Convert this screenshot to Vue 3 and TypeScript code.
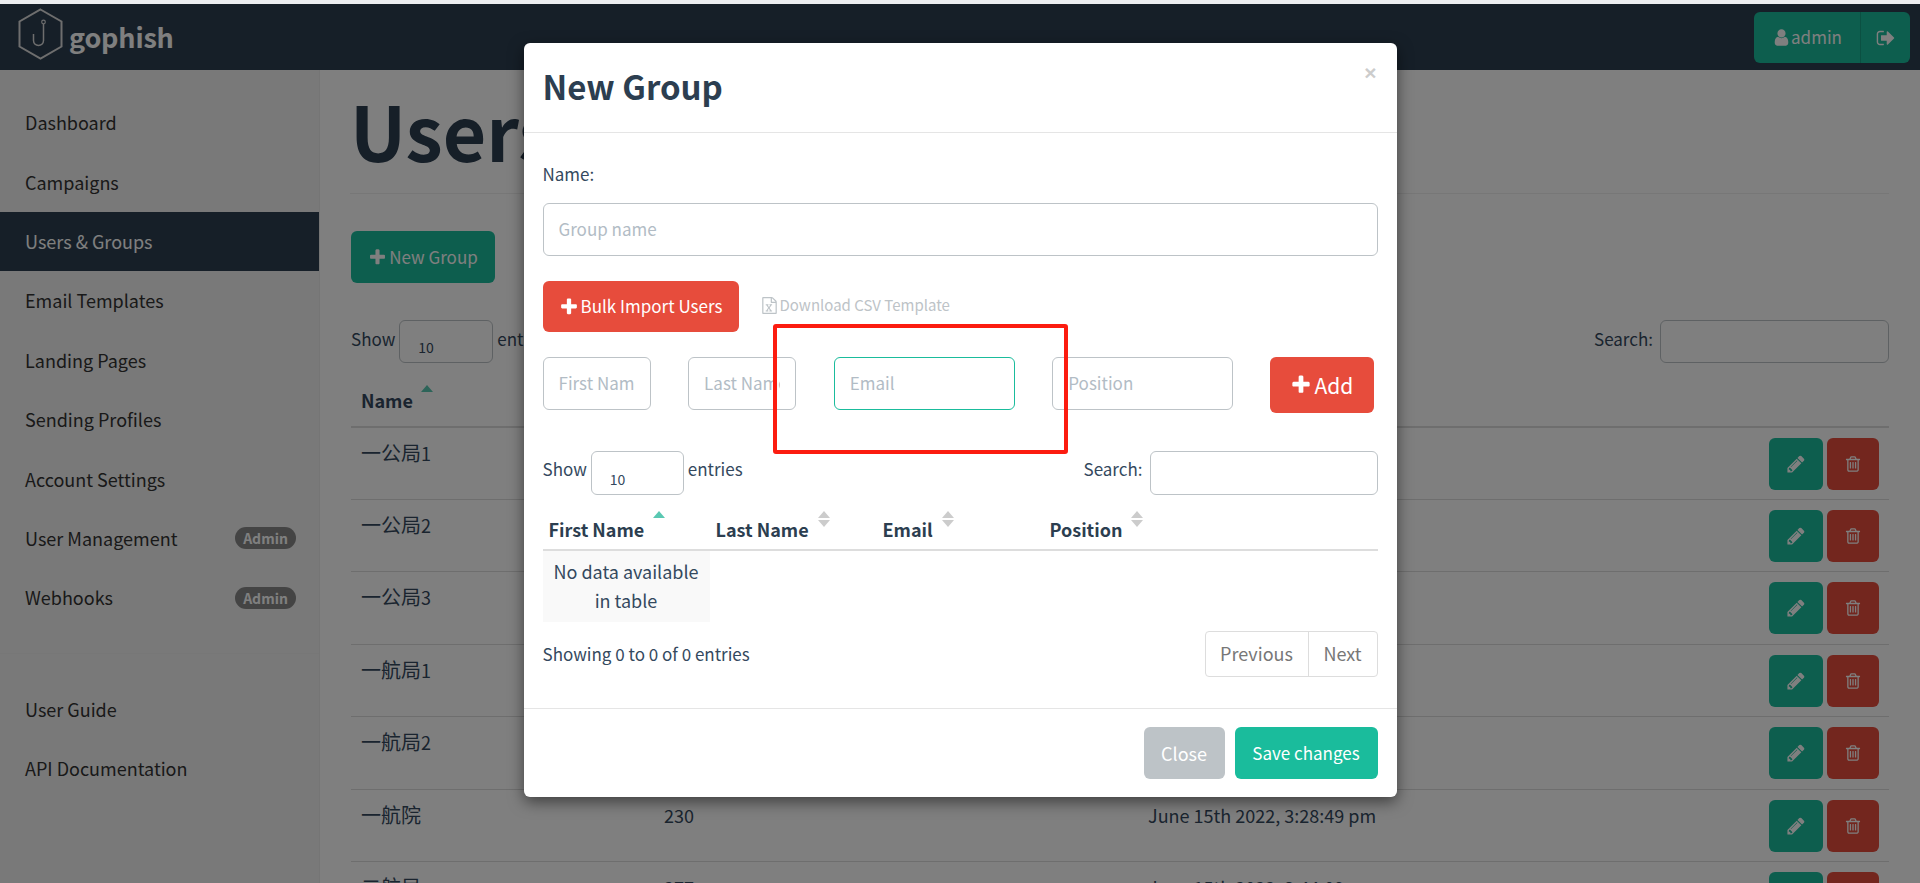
<script setup lang="ts">
interface Row { zh: string; suffix: string; count: string; date: string }

const icons = {
  plus: 'M1600 736v192q0 40-28 68t-68 28h-416v416q0 40-28 68t-68 28h-192q-40 0-68-28t-28-68v-416h-416q-40 0-68-28t-28-68v-192q0-40 28-68t68-28h416v-416q0-40 28-68t68-28h192q40 0 68 28t28 68v416h416q40 0 68 28t28 68z',
  user: 'M1536 1399q0 109-62.5 187t-150.5 78h-854q-88 0-150.5-78t-62.5-187q0-85 8.5-160.5t31.5-152 58.5-131 94-89 134.5-34.5q131 128 313 128t313-128q76 0 134.5 34.5t94 89 58.5 131 31.5 152 8.5 160.5zm-256-887q0 159-112.5 271.5t-271.5 112.5-271.5-112.5-112.5-271.5 112.5-271.5 271.5-112.5 271.5 112.5 112.5 271.5z',
  signOut: 'M704 1440q0 4 1 20t.5 26.5-3 23.5-10 19.5-20.5 6.5h-320q-119 0-203.5-84.5t-84.5-203.5v-704q0-119 84.5-203.5t203.5-84.5h320q13 0 22.5 9.5t9.5 22.5q0 4 1 20t.5 26.5-3 23.5-10 19.5-20.5 6.5h-320q-66 0-113 47t-47 113v704q0 66 47 113t113 47h312l11.5 1 11.5 3 8 5.5 7 9 2 13.5zm928-544q0 26-19 45l-544 544q-19 19-45 19t-45-19-19-45v-288h-448q-26 0-45-19t-19-45v-384q0-26 19-45t45-19h448v-288q0-26 19-45t45-19 45 19l544 544q19 19 19 45z',
  pencil: 'M491 1536l91-91-235-235-91 91v107h128v128h107zm523-928q0-22-22-22-10 0-17 7l-542 542q-7 7-7 17 0 22 22 22 10 0 17-7l542-542q7-7 7-17zm-54-192l416 416-832 832h-416v-416zm683 96q0 53-37 90l-166 166-416-416 166-165q36-38 90-38 53 0 91 38l235 234q37 39 37 91z',
  trash: 'M704 736v576q0 14-9 23t-23 9h-64q-14 0-23-9t-9-23v-576q0-14 9-23t23-9h64q14 0 23 9t9 23zm256 0v576q0 14-9 23t-23 9h-64q-14 0-23-9t-9-23v-576q0-14 9-23t23-9h64q14 0 23 9t9 23zm256 0v576q0 14-9 23t-23 9h-64q-14 0-23-9t-9-23v-576q0-14 9-23t23-9h64q14 0 23 9t9 23zm128 724v-948h-896v948q0 22 7 40.5t14.5 27 10.5 8.5h832q3 0 10.5-8.5t14.5-27 7-40.5zm-672-1076h448l-48-117q-7-9-17-11h-317q-10 2-17 11zm928 32v64q0 14-9 23t-23 9h-96v948q0 83-47 143.5t-113 60.5h-832q-66 0-113-58.5t-47-141.5v-952h-96q-14 0-23-9t-9-23v-64q0-14 9-23t23-9h309l70-167q15-37 54-63t79-26h320q40 0 79 26t54 63l70 167h309q14 0 23 9t9 23z',
  excel: 'M1596 380q28 28 48 76t20 88v1152q0 40-28 68t-68 28h-1344q-40 0-68-28t-28-68v-1600q0-40 28-68t68-28h896q40 0 88 20t76 48zm-444-244v376h376q-10-29-22-41l-313-313q-12-12-41-22zm384 1528v-1024h-416q-40 0-68-28t-28-68v-416h-768v1536h1280zm-1043-244v106h281v-106h-75l103-161q5-7 10-16.5t7.5-13.5 3.5-4h2q1 4 5 10 2 4 4.5 7.5t6 8 6.5 8.5l107 161h-76v106h291v-106h-68l-192-273 195-282h67v-107h-279v107h74l-103 159q-4 7-10 16.5t-9 13.5l-2 3h-2q-1-4-5-10-6-11-17-23l-106-159h76v-107h-290v107h68l189 272-194 283h-68z'
}

const primaryNav = [
  { label: 'Dashboard' },
  { label: 'Campaigns' },
  { label: 'Users & Groups', active: true },
  { label: 'Email Templates' },
  { label: 'Landing Pages' },
  { label: 'Sending Profiles' },
  { label: 'Account Settings' },
  { label: 'User Management', admin: true },
  { label: 'Webhooks', admin: true }
]
const secondaryNav = ['User Guide', 'API Documentation']

const rows: Row[] = [
  { zh: '一公局', suffix: '1', count: '230', date: 'June 15th 2022, 3:20:11 pm' },
  { zh: '一公局', suffix: '2', count: '230', date: 'June 15th 2022, 3:21:37 pm' },
  { zh: '一公局', suffix: '3', count: '230', date: 'June 15th 2022, 3:23:02 pm' },
  { zh: '一航局', suffix: '1', count: '230', date: 'June 15th 2022, 3:25:18 pm' },
  { zh: '一航局', suffix: '2', count: '230', date: 'June 15th 2022, 3:27:03 pm' },
  { zh: '一航院', suffix: '', count: '230', date: 'June 15th 2022, 3:28:49 pm' },
  { zh: '二航局', suffix: '', count: '277', date: 'June 15th 2022, 3:44:09 pm' }
]

const modalColumns = [
  { label: 'First Name', sorted: true },
  { label: 'Last Name', sorted: false },
  { label: 'Email', sorted: false },
  { label: 'Position', sorted: false }
]
</script>

<template>
  <div class="screen">
    <div class="top-strip"></div>
    <header class="navbar">
      <div class="brand">
        <svg class="hex" viewBox="0 0 46 52" width="46" height="52" fill="none">
          <path d="M22.5 1.5 43.5 13.5V38.5L22.5 50.5 1.5 38.5V13.5Z" stroke="#dcdcdc" stroke-width="2" />
          <circle cx="25.5" cy="14" r="1.8" stroke="#dcdcdc" stroke-width="1.2" />
          <path d="M25.5 16V32.5C25.5 39 15.5 39 15.5 32.5V26" stroke="#dcdcdc" stroke-width="1.5" />
        </svg>
        <span class="brand-name">gophish</span>
      </div>
      <div class="account">
        <span class="account-name">
          <svg class="ic" viewBox="0 0 1792 1792"><path :d="icons.user" /></svg>
          admin
        </span>
        <span class="account-exit">
          <svg class="ic" viewBox="0 0 1792 1792"><path :d="icons.signOut" /></svg>
        </span>
      </div>
    </header>

    <div class="layout">
      <aside class="sidebar">
        <nav class="nav-group">
          <a v-for="item in primaryNav" :key="item.label" class="nav-item" :class="{ active: item.active }">
            <span>{{ item.label }}</span>
            <span v-if="item.admin" class="badge">Admin</span>
          </a>
        </nav>
        <div class="nav-rule"></div>
        <nav class="nav-group">
          <a v-for="label in secondaryNav" :key="label" class="nav-item">{{ label }}</a>
        </nav>
      </aside>

      <main class="content">
        <h1 class="page-title">Users &amp; Groups</h1>
        <button class="btn green new-group">
          <svg class="ic" viewBox="0 0 1792 1792"><path :d="icons.plus" /></svg>
          New Group
        </button>
        <div class="dt-bar">
          <label class="dt-length">
            <span class="dt-text">Show</span>
            <select class="dt-select page-select"><option>10</option></select>
            <span class="dt-text">entries</span>
          </label>
          <label class="dt-search">
            <span class="dt-text">Search:</span>
            <input class="dt-input page-search" />
          </label>
        </div>
        <div class="grid-row head">
          <div class="th-name">Name <span class="caret-up teal"></span></div>
          <div># of Members</div>
          <div>Modified Date</div>
          <div></div>
        </div>
        <div v-for="row in rows" :key="row.zh + row.suffix" class="grid-row">
          <div class="cell name-cell"><span class="zh">{{ row.zh }}</span>{{ row.suffix }}</div>
          <div class="cell">{{ row.count }}</div>
          <div class="cell">{{ row.date }}</div>
          <div class="actions">
            <button class="btn green square">
              <svg class="ic ic-pencil" viewBox="0 0 1792 1792"><path :d="icons.pencil" /></svg>
            </button>
            <button class="btn red square narrow">
              <svg class="ic" viewBox="0 0 1792 1792"><path :d="icons.trash" /></svg>
            </button>
          </div>
        </div>
      </main>
    </div>

    <div class="backdrop">
      <section class="modal">
        <header class="modal-head">
          <h2>New Group</h2>
          <span class="modal-x">×</span>
        </header>
        <div class="modal-body">
          <label class="name-label">Name:</label>
          <input class="field name-field" placeholder="Group name" />

          <div class="bulk-row">
            <button class="btn bulk">
              <svg class="ic" viewBox="0 0 1792 1792"><path :d="icons.plus" /></svg>
              Bulk Import Users
            </button>
            <span class="csv">
              <svg class="ic csv-ic" viewBox="0 0 1792 1792"><path :d="icons.excel" /></svg>
              Download CSV Template
            </span>
          </div>

          <div class="target-row">
            <input class="field" placeholder="First Name" />
            <input class="field" placeholder="Last Name" />
            <input class="field focused" placeholder="Email" />
            <input class="field" placeholder="Position" />
            <button class="btn add">
              <svg class="ic" viewBox="0 0 1792 1792"><path :d="icons.plus" /></svg>
              Add
            </button>
          </div>

          <div class="modal-bar">
            <label class="dt-length">
              <span class="dt-text">Show</span>
              <select class="dt-select"><option>10</option></select>
              <span class="dt-text">entries</span>
            </label>
            <label class="dt-search">
              <span class="dt-text">Search:</span>
              <input class="dt-input" />
            </label>
          </div>

          <div class="modal-head-row">
            <div v-for="col in modalColumns" :key="col.label" class="modal-th">
              <span>{{ col.label }}</span>
              <span class="sorter">
                <span class="caret-up" :class="{ teal: col.sorted }"></span>
                <span v-if="!col.sorted" class="caret-down"></span>
              </span>
            </div>
          </div>
          <div class="empty-cell">No data available in table</div>

          <div class="modal-foot-row">
            <span class="showing">Showing 0 to 0 of 0 entries</span>
            <div class="pager">
              <span class="pager-prev">Previous</span>
              <span class="pager-next">Next</span>
            </div>
          </div>
        </div>
        <footer class="modal-foot">
          <button class="btn grey">Close</button>
          <button class="btn save">Save changes</button>
        </footer>
        <div class="annotation"></div>
      </section>
    </div>
  </div>
</template>

<style>
html, body { margin: 0; height: 883px; overflow: hidden; background: #fff; }
</style>

<style scoped>
* { box-sizing: border-box; }
.screen {
  position: relative;
  height: 883px;
  overflow: hidden;
  font-family: "Noto Sans CJK SC", "Noto Sans", sans-serif;
  font-size: 18px;
  line-height: 28.8px;
  color: #34495e;
  background: #fff;
}
.top-strip { height: 4px; background: #eceef0; }
.navbar {
  height: 66px;
  background: #2c3e50;
  display: flex;
  align-items: flex-start;
  justify-content: space-between;
  padding: 8px 10px 0 18px;
}
.brand { display: flex; align-items: flex-start; color: #fff; }
.hex { margin-top: -4px; display: block; }
.brand-name { font-size: 27px; font-weight: 700; line-height: 40px; margin: 5px 0 0 5px; letter-spacing: -0.2px; }
.account {
  display: flex;
  height: 51px;
  background: #1abc9c;
  border-radius: 6px;
  color: #fff;
  align-items: center;
  font-size: 17px;
}
.account-name {
  width: 107px;
  height: 100%;
  display: flex;
  align-items: center;
  justify-content: center;
  gap: 0;
  border-right: 1px solid #16a085;
}
.account-exit { width: 49px; display: flex; justify-content: center; }
.account-exit .ic { width: 20px; height: 20px; }
.ic { width: 19px; height: 19px; fill: currentColor; flex: none; display: inline-block; }

.layout { display: flex; height: 813px; }
.sidebar {
  width: 320px;
  flex: none;
  background: #f2f2f2;
  border-right: 1px solid #eaeaea;
  padding-top: 23px;
  color: #333;
}
.nav-group { display: flex; flex-direction: column; }
.nav-item {
  height: 59.4px;
  display: flex;
  align-items: center;
  justify-content: space-between;
  padding: 0 23px 0 25px;
  color: #333;
}
.nav-item.active { background: #2c3e50; color: #fff; }
.nav-rule { height: 1px; background: #eee; margin: 25px 0 26px; }
.badge {
  width: 61px;
  height: 22px;
  border-radius: 11px;
  background: #888;
  color: #fff;
  font-size: 14px;
  font-weight: 700;
  line-height: 22px;
  text-align: center;
}

.content { flex: 1; padding: 0 31px; min-width: 0; }
.page-title {
  margin: 0 0 0 -1px;
  height: 124px;
  padding-top: 10px;
  border-bottom: 1px solid #eee;
  font-size: 75px;
  line-height: 100px;
  font-weight: 700;
  white-space: nowrap;
  color: #2c3e50;
}
.btn {
  border: 0;
  border-radius: 6px;
  color: #fff;
  font: inherit;
  font-size: 17px;
  padding: 0;
  display: inline-flex;
  align-items: center;
  justify-content: center;
  gap: 2px;
}
.green { background: #1abc9c; }
.red { background: #e74c3c; }
.new-group { display: flex; width: 144px; height: 52px; margin-top: 37px; }
.dt-bar {
  display: flex;
  justify-content: space-between;
  height: 43px;
  margin-top: 37px;
}
.dt-length, .dt-search { display: flex; align-items: flex-start; gap: 4px; white-space: nowrap; font-size: 17px; }
.dt-search { gap: 7px; }
.dt-text { margin-top: 5px; }
.dt-select {
  appearance: none;
  width: 93px;
  height: 44px;
  margin: 0;
  padding: 11px 0 0 18px;
  border: 1px solid #bdc3c7;
  border-radius: 6px;
  background: transparent;
  font: inherit;
  font-size: 14px;
  line-height: 20px;
  color: #34495e;
}
.dt-input {
  width: 228px;
  height: 44px;
  border: 1px solid #bdc3c7;
  border-radius: 6px;
  background: transparent;
  margin: 0;
}
.page-select { width: 94px; height: 43px; }
.page-search { width: 229px; height: 43px; }
.grid-row {
  display: grid;
  grid-template-columns: 303px 484px 1fr auto;
  height: 72.4px;
  padding: 10px 10px 0 10px;
  border-bottom: 1px solid #ddd;
}
.cell { padding-top: 1px; }
.grid-row.head {
  height: 64.6px;
  padding-top: 23px;
  font-weight: 700;
  border-bottom: 2px solid #ddd;
}
.th-name { display: flex; align-items: flex-start; gap: 8px; }
.th-name .caret-up { margin-top: -1px; }
.name-cell { white-space: nowrap; }
.zh { font-size: 20px; }
.actions { display: flex; gap: 4px; }
.square { width: 54px; height: 52px; }
.square .ic { width: 18px; height: 18px; }
.square .ic-pencil { width: 20px; height: 20px; }
.narrow { width: 52px; }

.caret-up, .caret-down {
  display: block;
  width: 0;
  height: 0;
  border-left: 6.5px solid transparent;
  border-right: 6.5px solid transparent;
}
.caret-up { border-bottom: 7px solid #ccc; }
.caret-down { border-top: 7px solid #ccc; margin-top: 2px; }
.caret-up.teal { border-bottom-color: #5ac8b2; }

.backdrop {
  position: absolute;
  inset: 4px 0 0 0;
  background: rgba(0, 0, 0, 0.5);
  display: flex;
  justify-content: center;
  align-items: flex-start;
  padding-top: 39px;
}
.modal {
  position: relative;
  width: 873px;
  height: 754px;
  background: #fff;
  border-radius: 6px;
  box-shadow: 0 5px 15px rgba(0, 0, 0, 0.5);
  display: flex;
  flex-direction: column;
}
.modal-head {
  position: relative;
  height: 90px;
  flex: none;
  border-bottom: 1px solid #e5e5e5;
  padding: 18px 19px 0;
}
.modal-head h2 {
  margin: 0;
  font-size: 33px;
  line-height: 50px;
  font-weight: 700;
  color: #2c3e50;
}
.modal-x {
  position: absolute;
  right: 20px;
  top: 15px;
  font-family: "Liberation Sans", sans-serif;
  font-size: 21px;
  font-weight: 700;
  line-height: 30px;
  color: #ccc;
}
.modal-body { flex: 1; padding: 27px 19px 0 19px; }
.name-label { display: block; height: 43px; line-height: 28px; font-size: 17px; }
.field {
  display: block;
  width: 100%;
  height: 53px;
  margin: 0;
  padding: 0 15px 2px;
  border: 1px solid #bdc3c7;
  border-radius: 6px;
  font: inherit;
  font-size: 17px;
  color: #34495e;
  background: #fff;
  outline: none;
}
.field::placeholder { color: #b2bcc5; opacity: 1; }
.field.focused { border-color: #1abc9c; }
.bulk-row { display: flex; align-items: flex-start; margin-top: 25px; }
.bulk { width: 196px; height: 51px; background: #e74c3c; }
.bulk .ic { width: 20px; height: 20px; }
.csv {
  display: flex;
  align-items: center;
  gap: 2px;
  margin: 10px 0 0 22px;
  font-size: 15px;
  color: #bdc3c7;
}
.csv-ic { width: 17px; height: 19px; }
.target-row {
  display: grid;
  grid-template-columns: 108px 108px 181px 181px 104px;
  column-gap: 37.6px;
  align-items: start;
  margin-top: 25px;
}
.add { width: 104px; height: 56px; margin-left: -1px; background: #e74c3c; font-size: 21px; }
.add .ic { width: 22px; height: 22px; }
.modal-bar {
  display: flex;
  justify-content: space-between;
  margin-top: 38px;
  height: 44px;
}
.modal-bar .dt-text { margin-top: 4px; }
.modal-head-row {
  display: grid;
  grid-template-columns: repeat(4, 167px);
  height: 56px;
  border-bottom: 2px solid #ddd;
  font-weight: 700;
  color: #2c3e50;
}
.modal-th { display: flex; align-items: flex-start; gap: 9px; padding: 20px 0 0 6px; }
.sorter { display: block; margin-top: -4px; }
.empty-cell {
  width: 167px;
  height: 71px;
  padding: 6px 6px 0;
  background: #f9f9f9;
  text-align: center;
}
.modal-foot-row {
  display: flex;
  justify-content: space-between;
  align-items: flex-start;
  margin-top: 9px;
}
.showing { margin-top: 9px; font-size: 17px; }
.pager {
  display: flex;
  height: 46px;
  border: 1px solid #ddd;
  border-radius: 4px;
  color: #777;
  line-height: 42px;
}
.pager-prev { width: 103px; text-align: center; border-right: 1px solid #ddd; }
.pager-next { width: 68px; text-align: center; }
.modal-foot {
  height: 89px;
  flex: none;
  border-top: 1px solid #e5e5e5;
  display: flex;
  justify-content: flex-end;
  gap: 10px;
  padding: 18px 19px 0 0;
}
.grey { width: 81px; height: 52px; background: #bdc3c7; font-size: 18px; }
.save { width: 143px; height: 52px; background: #1abc9c; }
.annotation {
  position: absolute;
  left: 249px;
  top: 281px;
  width: 295px;
  height: 130px;
  border: 4px solid #fc1c10;
  border-radius: 3px;
  pointer-events: none;
}
</style>
